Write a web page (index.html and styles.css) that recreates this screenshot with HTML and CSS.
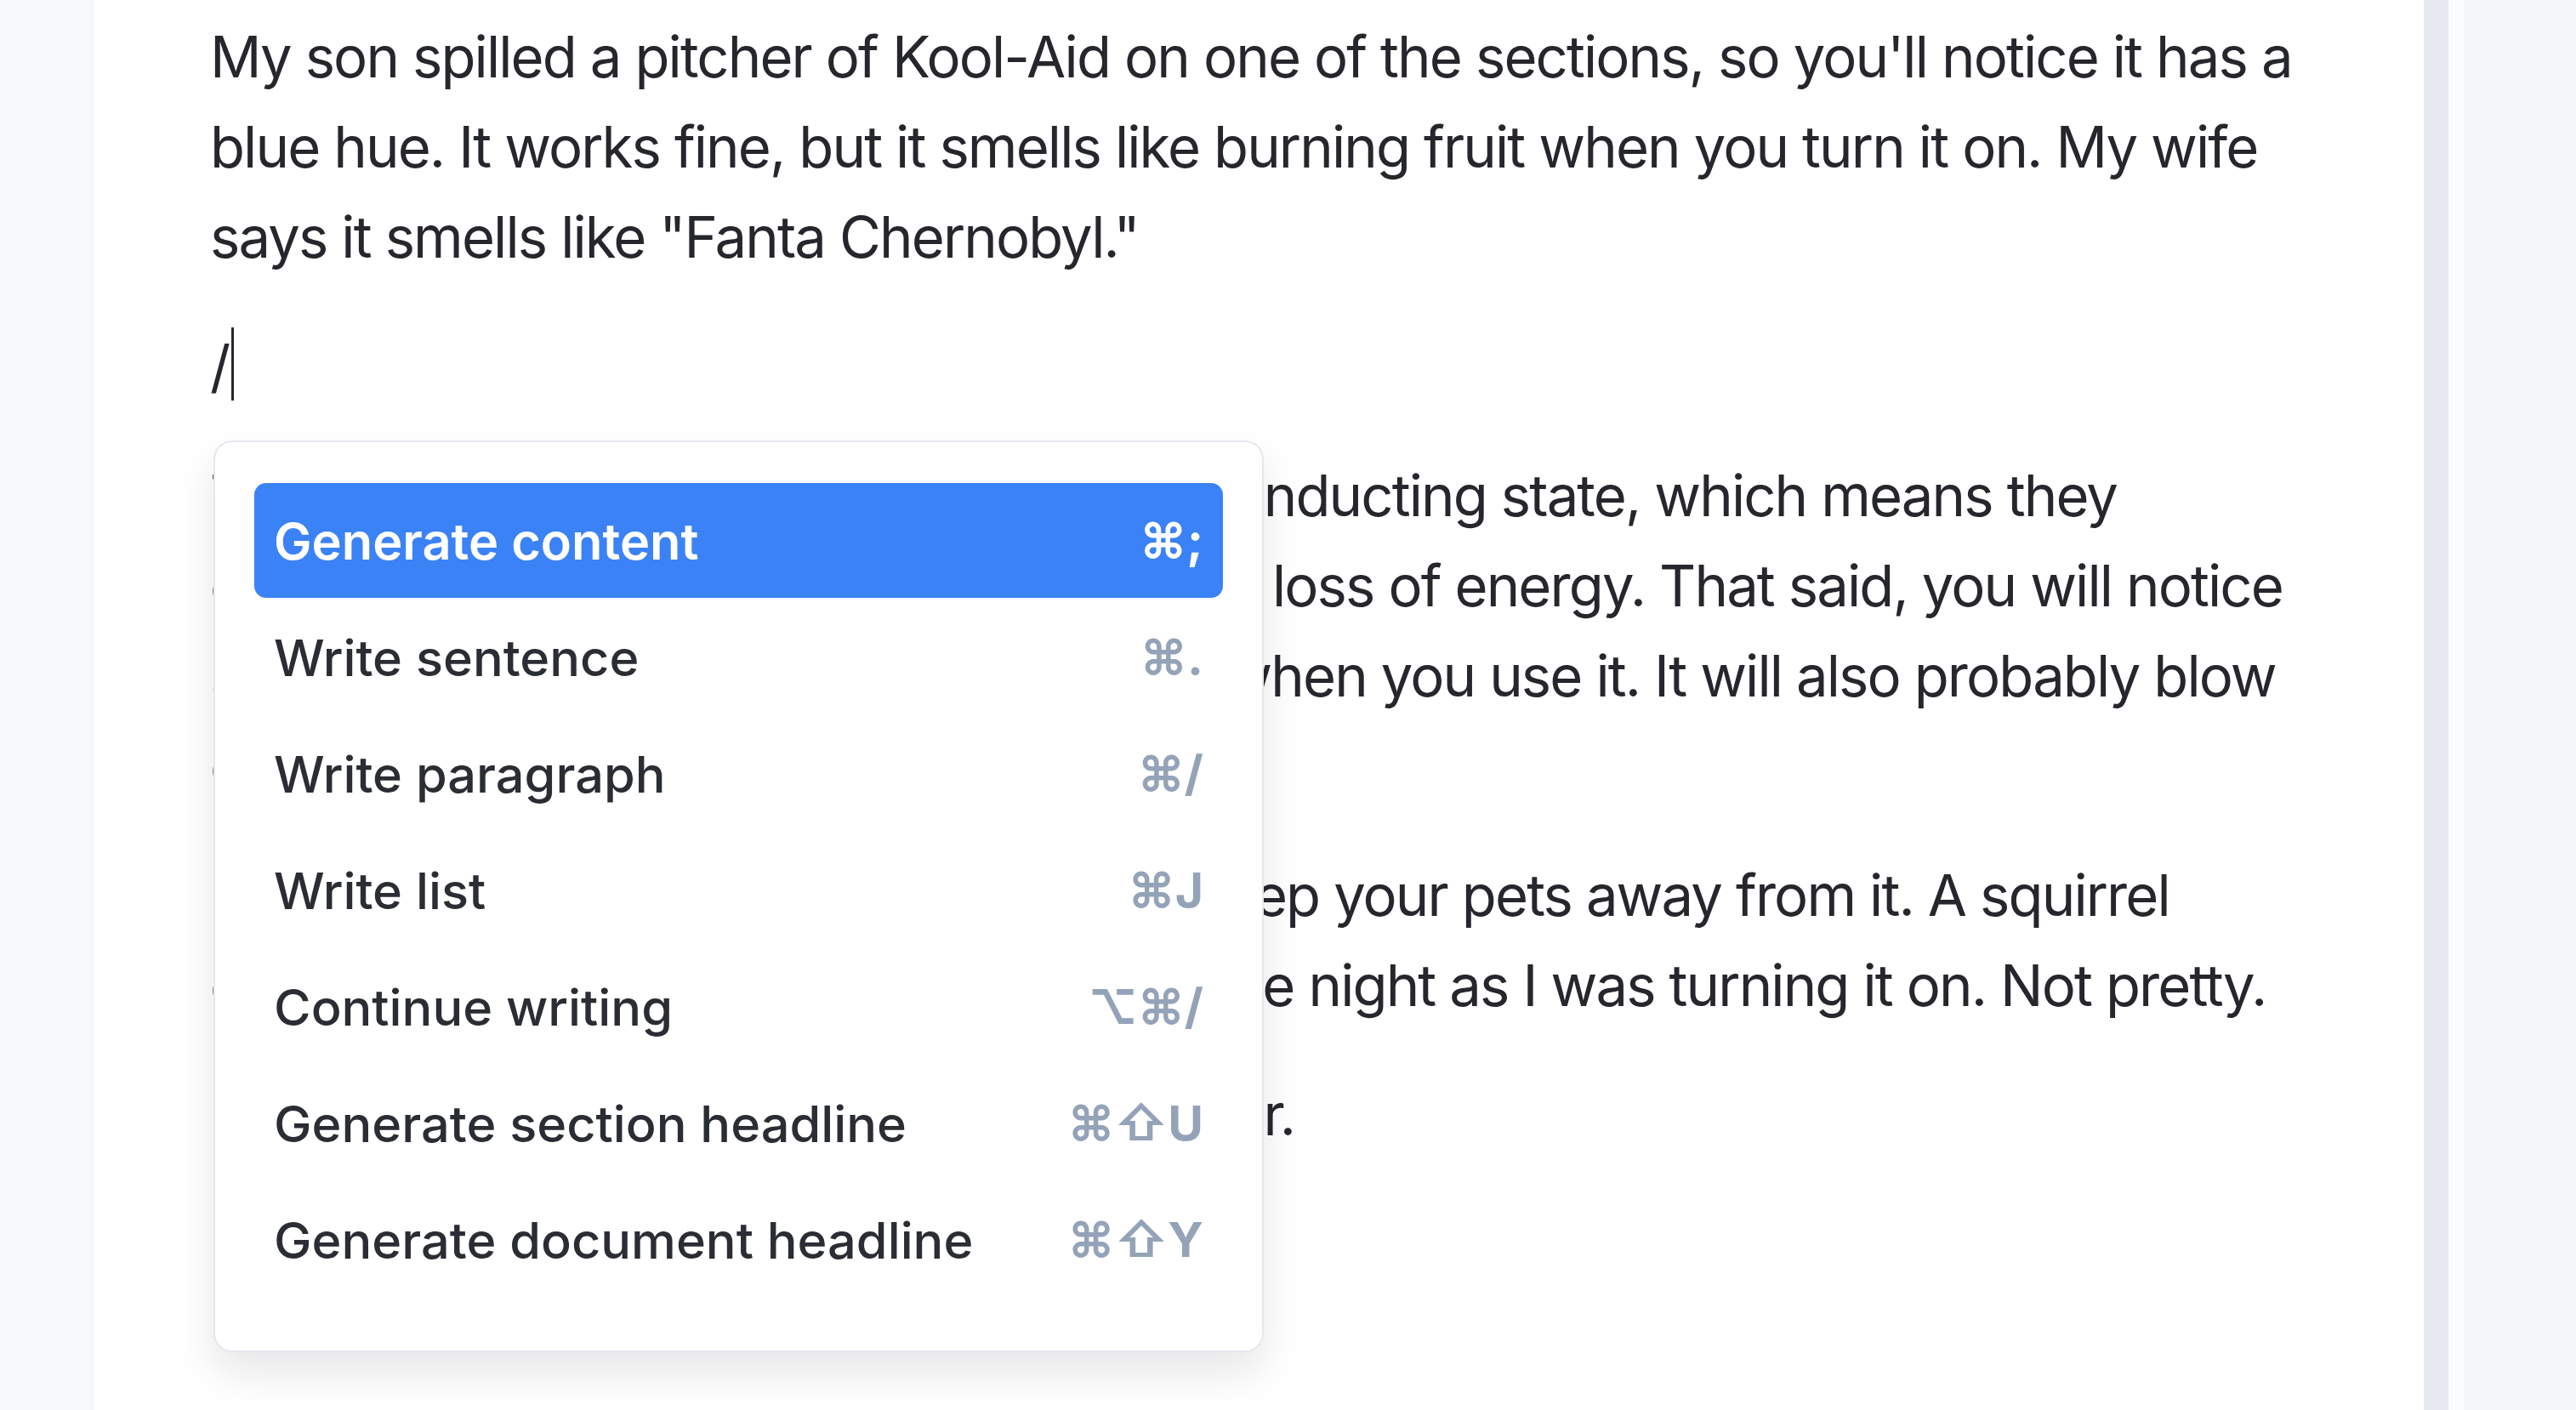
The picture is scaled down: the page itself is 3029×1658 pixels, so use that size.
FILE: index.html
```html
<!DOCTYPE html>
<html lang="en">
<head>
  <meta charset="UTF-8" />
  <meta name="viewport" content="width=device-width, initial-scale=1.0"/>
  <title>Space heater for sale</title>
  <link rel="stylesheet" href="styles.css">
</head>
<body>

  <div class="app">
    <aside class="rail"></aside>

    <main class="sheet">
      <div class="doc">
        <p>My son spilled a pitcher of Kool-Aid on one of the sections, so you'll notice it has a blue hue. It works fine, but it smells like burning fruit when you turn it on. My wife says it smells like "Fanta Chernobyl."</p>
        <p class="slash-line">/<span class="caret"></span></p>
        <p>The coils of this unit are kept in a superconducting state, which means they experience little resistance and almost no loss of energy. That said, you will notice some soft humming and a dim red glow when you use it. It will also probably blow out a fuse or two.</p>
        <p>Last, but not least, kindly make sure to keep your pets away from it. A squirrel crawled into the back of my old heater one night as I was turning it on. Not pretty.</p>
        <p>Good luck and I hope you enjoy the heater.</p>
      </div>

      <div class="slash-menu">
        <div class="item active"><span>Generate content</span><kbd>⌘;</kbd></div>
        <div class="item"><span>Write sentence</span><kbd>⌘.</kbd></div>
        <div class="item"><span>Write paragraph</span><kbd>⌘/</kbd></div>
        <div class="item"><span>Write list</span><kbd>⌘J</kbd></div>
        <div class="item"><span>Continue writing</span><kbd>⌥⌘/</kbd></div>
        <div class="item"><span>Generate section headline</span><kbd>⌘⇧U</kbd></div>
        <div class="item"><span>Generate document headline</span><kbd>⌘⇧Y</kbd></div>
      </div>
    </main>

    <div class="edge"></div>
    <aside class="side"></aside>
  </div>

</body>
</html>
```

FILE: styles.css
```css
body {
  margin: 0;
  background: #f7f8fb;
  font-family: Inter, 'Noto Sans', sans-serif;
  color: #25272c;
}

.app {
  display: flex;
  height: 1658px;
  overflow: hidden;
}

.rail {
  width: 109px;
  background: #f8f9fb;
  border-right: 1px solid #eef0f5;
}

.sheet {
  position: relative;
  width: 2740px;
  box-sizing: border-box;
  padding: 14px 0 0 137px;
  background: #fff;
}

.edge {
  width: 29px;
  background: #e6e9f0;
}

.side {
  flex: 1;
  background: linear-gradient(to right, #fbfcfd 0, #fbfcfd 18px, #f6f7fa 18px);
}

.doc {
  width: 2493px;
  font-size: 67px;
  line-height: 106px;
  letter-spacing: -1.9px;
}

.doc p {
  margin: 0 0 46px;
}

.caret {
  display: inline-block;
  width: 3px;
  height: 86px;
  margin-left: 3px;
  vertical-align: -16px;
  background: #25272c;
}

/* slash command popover */
.slash-menu {
  position: absolute;
  left: 141px;
  top: 518px;
  width: 1235px;
  box-sizing: border-box;
  padding: 48px 46px 63px;
  background: #fff;
  border: 2px solid #e4e8ef;
  border-radius: 22px;
  box-shadow: 0 24px 48px rgba(15, 23, 42, 0.1);
}

.item {
  display: flex;
  justify-content: space-between;
  align-items: center;
  height: 135px;
  padding: 0 23px;
  margin-bottom: 2px;
  border-radius: 14px;
  font-size: 59.5px;
  font-weight: 500;
  color: #2a2d33;
}

.item:last-child {
  margin-bottom: 0;
}

.item kbd {
  font-family: inherit;
  font-size: 57px;
  font-weight: 700;
  color: #94a3b8;
}

.item.active {
  background: #3b82f6;
  color: #fff;
  font-weight: 600;
}

.item.active kbd {
  color: #fff;
}
```
